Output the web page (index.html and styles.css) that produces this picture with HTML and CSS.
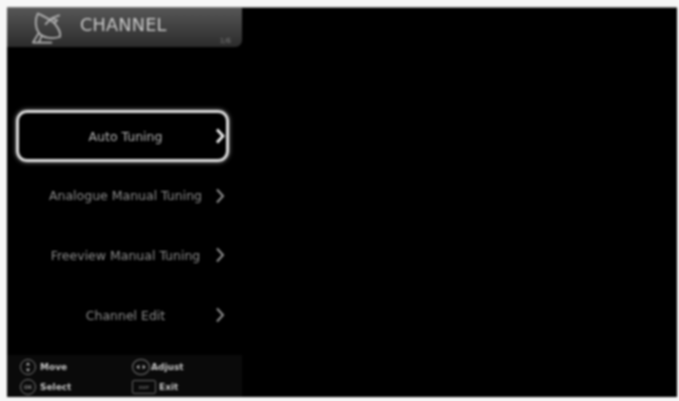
FILE: index.html
```html
<!DOCTYPE html>
<html lang="en">
<head>
<meta charset="utf-8">
<title>Channel</title>
<link rel="stylesheet" href="styles.css">
</head>
<body>
<main class="screen">
  <aside class="panel">
    <header class="head">
      <svg class="dish" viewBox="0 0 34 36" fill="none" stroke="currentColor" stroke-width="1.800" stroke-linecap="round" stroke-linejoin="round">
        <path d="M6 3 C3 9 3 17 7 23 C11 28 20 30 29 27 C30 22 27 18 23 13 C19 9 12 6 6 3 Z"/>
        <path d="M14 14 L20 8 L28 5 M20 8 L26 10 L23 13"/>
        <path d="M7 23 L1 33 M1 33 H20 M10 26 L7 33"/>
      </svg>
      <h1 class="title">CHANNEL</h1>
      <span class="page">1/6</span>
    </header>
    <nav class="menu">
      <a class="item active"><span class="label">Auto Tuning</span><svg class="chev" viewBox="0 0 10 16"><path d="M2 1.500 L8 8 L2 14.500"/></svg></a>
      <a class="item"><span class="label">Analogue Manual Tuning</span><svg class="chev" viewBox="0 0 10 16"><path d="M2 1.500 L8 8 L2 14.500"/></svg></a>
      <a class="item"><span class="label">Freeview Manual Tuning</span><svg class="chev" viewBox="0 0 10 16"><path d="M2 1.500 L8 8 L2 14.500"/></svg></a>
      <a class="item"><span class="label">Channel Edit</span><svg class="chev" viewBox="0 0 10 16"><path d="M2 1.500 L8 8 L2 14.500"/></svg></a>
    </nav>
    <footer class="keys">
      <div class="key"><span class="round"><svg viewBox="0 0 14 14"><path d="M7 1.500 L9.500 5 H4.500 Z M7 12.500 L9.500 9 H4.500 Z"/></svg></span>Move</div>
      <div class="key"><span class="round wide"><svg viewBox="0 0 14 14"><path d="M1.500 7 L5 4.500 V9.500 Z M12.500 7 L9 4.500 V9.500 Z"/></svg></span>Adjust</div>
      <div class="key"><span class="round ok">OK</span>Select</div>
      <div class="key"><span class="pill">EXIT</span>Exit</div>
    </footer>
  </aside>
</main>
</body>
</html>
```
FILE: styles.css
```css
* { box-sizing: border-box; }
html, body { height: 100%; }
body {
  margin: 0;
  padding: 7px 2px 4px 7px;
  background: #f6f6f6;
  font-family: "DejaVu Sans", sans-serif;
}
.screen {
  height: 100%;
  background: #000;
  border-top: 1px solid #777;
  filter: blur(0.85px);
  overflow: hidden;
}
.panel {
  width: 235px;
  height: 100%;
  display: flex;
  flex-direction: column;
}
.head {
  height: 39px;
  flex: none;
  display: flex;
  align-items: center;
  padding-left: 25px;
  background: linear-gradient(#565656, #3c3c3c 60%, #2c2c2c);
  border-bottom-right-radius: 7px;
  color: #b4b4b4;
  position: relative;
}
.dish { width: 33px; height: 36px; margin-top: 1px; }
.title {
  margin: 0 0 5px 15px;
  font-size: 17.700px;
  font-weight: 400;
  color: #c8c8c8;
  letter-spacing: 0.2px;
}
.page {
  position: absolute;
  right: 11px;
  bottom: 2px;
  font-size: 7px;
  color: #777;
}
.menu {
  flex: 1;
  display: flex;
  flex-direction: column;
  padding-top: 63px;
}
.item {
  height: 52px;
  margin: 0 13px 7.700px 9px;
  display: flex;
  align-items: center;
  color: #8c8c8c;
  font-size: 12.500px;
  border: 3px solid transparent;
  border-radius: 11px;
}
.item.active {
  color: #b4b4b4;
  border-color: #dcdcdc;
  box-shadow: 0 0 4px #999;
}
.label {
  flex: 1;
  text-align: center;
  white-space: nowrap;
  padding-left: 27px;
}
.chev {
  width: 10px;
  height: 16px;
  flex: none;
  margin: 0 1px 0 10px;
  fill: none;
  stroke: #8f8f8f;
  stroke-width: 2;
}
.active .chev { stroke: #eee; stroke-width: 2.800; }
.keys {
  height: 42px;
  flex: none;
  padding: 2px 0 0 13px;
  display: grid;
  grid-template-columns: 112px 1fr;
  grid-auto-rows: 20px;
  background: #0a0a0a;
  color: #c4c4c4;
  font-size: 9px;
  font-weight: 700;
}
.key { display: flex; align-items: center; gap: 2px; }
.round {
  width: 16px;
  height: 16px;
  margin-right: 2px;
  border: 1.500px solid #777;
  border-radius: 50%;
  display: flex;
  align-items: center;
  justify-content: center;
}
.round.wide { width: 18px; margin-right: -1px; }
.round svg { width: 12px; height: 12px; fill: #bbb; }
.ok { font-size: 5px; color: #888; }
.pill {
  width: 24px;
  height: 14px;
  margin-right: 1px;
  border: 1.500px solid #666;
  border-radius: 2px;
  font-size: 4px;
  color: #666;
  display: flex;
  align-items: center;
  justify-content: center;
}
```
